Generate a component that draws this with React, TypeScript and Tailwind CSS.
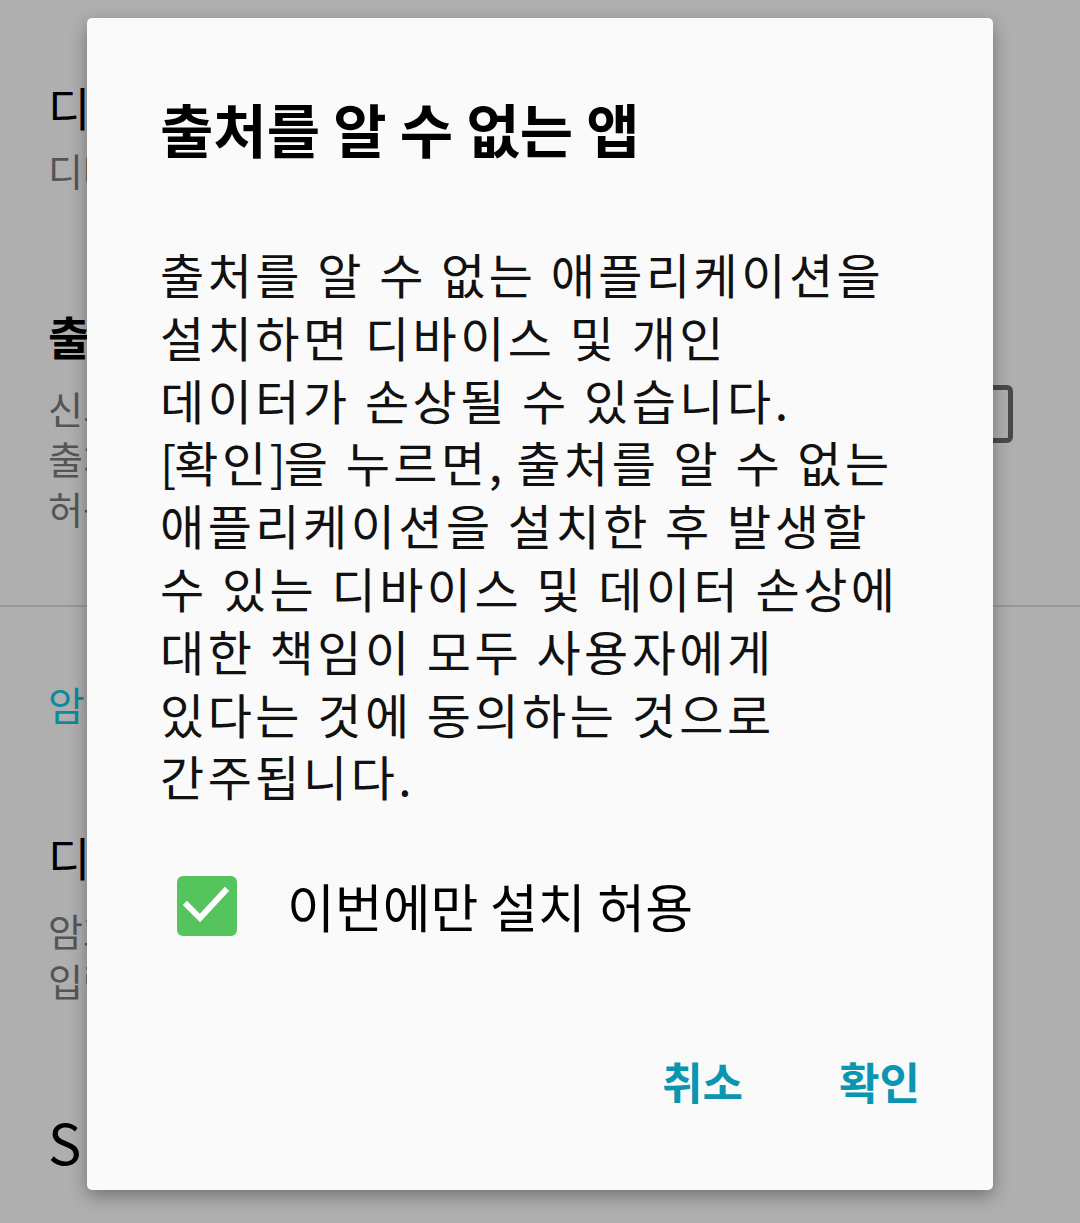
import React from 'react';

const font = { fontFamily: '"Noto Sans CJK KR", "Noto Sans", sans-serif' };

function BackgroundSettings() {
  return (
    <div className="w-[1080px] h-[1223px] bg-[#afafaf] overflow-hidden text-black" style={font}>
      <div className="pl-[48px] pt-[78px] flex flex-col">
        <div className="text-[46px] leading-[56px]">디바이스 관리자</div>
        <div className="text-[38px] leading-[48px] text-[#555] mt-[12px]">디바이스 관리자를 확인하거나 비활성화합니다.</div>
      </div>
      <div className="pl-[48px] pr-[67px] pt-[113px] flex items-start justify-between">
        <div className="flex flex-col">
          <div className="text-[46px] leading-[56px] font-bold">출처를 알 수 없는 앱</div>
          <div className="text-[38px] leading-[50px] text-[#555] mt-[20px]">
            신뢰할 수 없는 앱입니다.<br />출처를 알 수 없는 앱 설치를<br />허용합니다.
          </div>
        </div>
        <div className="w-[56px] h-[58px] border-[5px] border-[#4a4a4a] rounded-[6px] mt-[78px]" />
      </div>
      <div className="h-[2px] bg-[#989898] mt-[72px]" />
      <div className="pl-[48px] pt-[72px] text-[40px] leading-[50px] text-[#0c8a9e]">암호화</div>
      <div className="pl-[48px] pt-[99px] flex flex-col">
        <div className="text-[46px] leading-[56px]">디바이스 암호화</div>
        <div className="text-[38px] leading-[50px] text-[#555] mt-[21px]">
          암호화되지 않았습니다.<br />입력하세요.
        </div>
      </div>
      <div className="pl-[48px] pt-[104px] text-[56px] leading-[64px] tracking-[8px]">SD 카드 암호화</div>
    </div>
  );
}

function CheckIcon() {
  return (
    <svg viewBox="0 0 60 60" className="w-[60px] h-[60px] shrink-0">
      <rect x="0" y="0" width="60" height="60" rx="6" fill="#55c45c" />
      <path d="M10 29 L23 42 L48 15" fill="none" stroke="#ffffff" strokeWidth="6" strokeLinecap="square" />
    </svg>
  );
}

export default function App() {
  return (
    <div className="relative w-[1080px] h-[1223px] overflow-hidden">
      <BackgroundSettings />
      <div
        className="absolute left-[87px] top-[18px] w-[906px] h-[1172px] bg-[#fafafa] rounded-[5px] shadow-[0_6px_18px_rgba(0,0,0,0.35)] flex flex-col"
        style={font}
      >
        <div className="pl-[73px] pt-[74px] text-[58px] leading-[72px] font-bold text-black">출처를 알 수 없는 앱</div>
        <div className="pl-[73px] pr-[40px] pt-[78px] text-[48px] leading-[62.8px] tracking-[3.5px] text-[#111]">
          출처를 알 수 없는 애플리케이션을<br />
          설치하면 디바이스 및 개인<br />
          데이터가 손상될 수 있습니다.<br />
          <span className="tracking-[-2px]">[</span>확인<span className="tracking-[-2px]">]</span>을 누르면<span className="tracking-[0px]">,</span> 출처를 알 수 없는<br />
          애플리케이션을 설치한 후 발생할<br />
          수 있는 디바이스 및 데이터 손상에<br />
          대한 책임이 모두 사용자에게<br />
          있다는 것에 동의하는 것으로<br />
          간주됩니다.
        </div>
        <div className="pl-[90px] pt-[69px] flex items-center gap-[50px]">
          <CheckIcon />
          <span className="text-[52px] leading-[60px] text-black">이번에만 설치 허용</span>
        </div>
        <div className="mt-auto pb-[84px] pr-[73px] flex justify-end gap-[96px] text-[44px] leading-[50px] font-bold text-[#0a96b0]">
          <button>취소</button>
          <button>확인</button>
        </div>
      </div>
    </div>
  );
}
